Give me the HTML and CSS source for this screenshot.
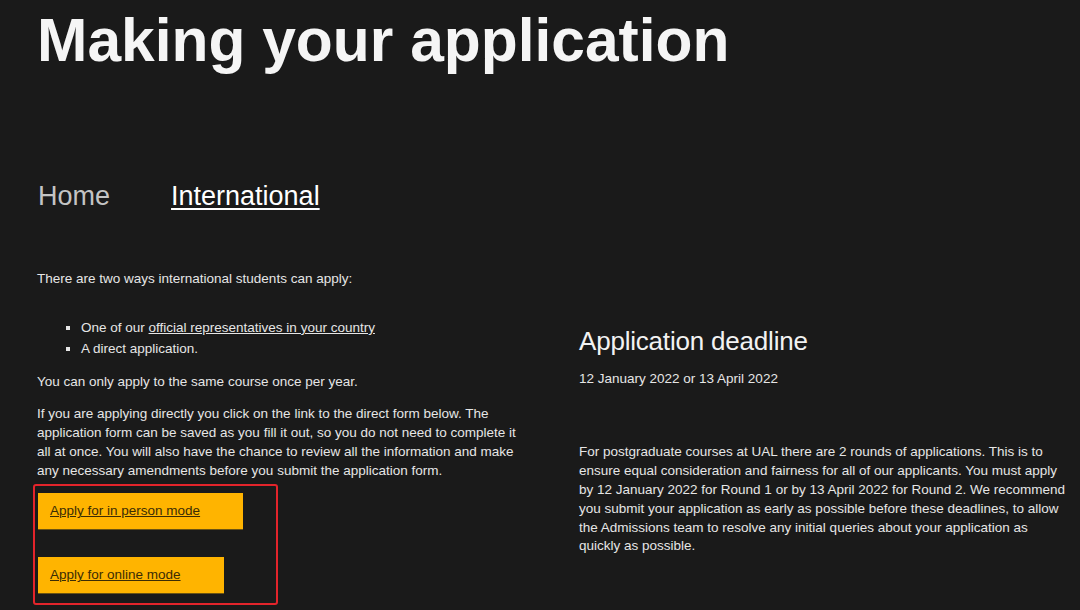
FILE: index.html
```html
<!DOCTYPE html>
<html lang="en">
<head>
    <meta charset="UTF-8">
    <title>Making your application</title>
    <link rel="stylesheet" href="styles.css">
</head>
<body>
    <div class="page">
        <h1 class="page-title">Making your application</h1>

        <nav class="tabs">
            <a href="#" class="tab">Home</a>
            <a href="#" class="tab active">International</a>
        </nav>

        <div class="content">
            <div class="col-main">
                <p>There are two ways international students can apply:</p>
                <ul class="ways-list">
                    <li>One of our <a href="#">official representatives in your country</a></li>
                    <li>A direct application.</li>
                </ul>
                <p>You can only apply to the same course once per year.</p>
                <p>If you are applying directly you click on the link to the direct form below. The application form can be saved as you fill it out, so you do not need to complete it all at once. You will also have the chance to review all the information and make any necessary amendments before you submit the application form.</p>

                <div class="apply-box">
                    <a href="#" class="apply-button">Apply for in person mode</a>
                    <a href="#" class="apply-button">Apply for online mode</a>
                </div>
            </div>

            <div class="col-side">
                <h2 class="deadline-title">Application deadline</h2>
                <p>12 January 2022 or 13 April 2022</p>
                <p class="deadline-info">For postgraduate courses at UAL there are 2 rounds of applications. This is to ensure equal consideration and fairness for all of our applicants. You must apply by 12 January 2022 for Round 1 or by 13 April 2022 for Round 2. We recommend you submit your application as early as possible before these deadlines, to allow the Admissions team to resolve any initial queries about your application as quickly as possible.</p>
            </div>
        </div>
    </div>
</body>
</html>
```

FILE: styles.css
```css
* {
    margin: 0;
    padding: 0;
    box-sizing: border-box;
}

html, body {
    height: 100%;
    overflow: hidden;
}

body {
    font-family: "Liberation Sans", Arial, sans-serif;
    background-color: #1a1a1a;
    color: #e6e6e6;
}

.page {
    padding-left: 37px;
}

.page-title {
    margin-top: 6px;
    font-size: 60.5px;
    line-height: 69px;
    font-weight: bold;
    color: #f5f5f5;
}

.tabs {
    display: flex;
    gap: 61px;
    margin-top: 106px;
    padding-left: 1px;
    line-height: 30px;
}

.tab {
    font-size: 27px;
    color: #c4c4c4;
    text-decoration: none;
}

.tab.active {
    color: #ffffff;
    text-decoration: underline;
    text-underline-offset: 3px;
    text-decoration-thickness: 2px;
}

.content {
    display: flex;
    gap: 50px;
    margin-top: 59px;
    font-size: 13.5px;
    line-height: 18.9px;
}

.col-main {
    width: 492px;
    flex-shrink: 0;
}

.col-main p {
    margin-bottom: 13px;
}

.col-main a {
    color: #e6e6e6;
}

.ways-list {
    list-style: square;
    margin: 28px 0 14px;
    padding-left: 44px;
    line-height: 21px;
}

.apply-box {
    width: 245px;
    margin: -9px 0 0 -4px;
    padding: 7px 0 9px 3px;
    border: 2px solid #e3242b;
    border-radius: 3px;
    display: flex;
    flex-direction: column;
    align-items: flex-start;
    gap: 27px;
}

.col-main .apply-button {
    display: block;
    background-color: #ffb400;
    color: #3b2c05;
    line-height: 36px;
    padding: 0 43px 0 12px;
    border-bottom: 1px solid #6b5312;
}

.col-side {
    width: 490px;
    padding-top: 56px;
}

.deadline-title {
    font-size: 26px;
    line-height: 30px;
    font-weight: normal;
    color: #f2f2f2;
    letter-spacing: -0.2px;
    margin-bottom: 14px;
}

.deadline-info {
    margin-top: 54px;
}
```
